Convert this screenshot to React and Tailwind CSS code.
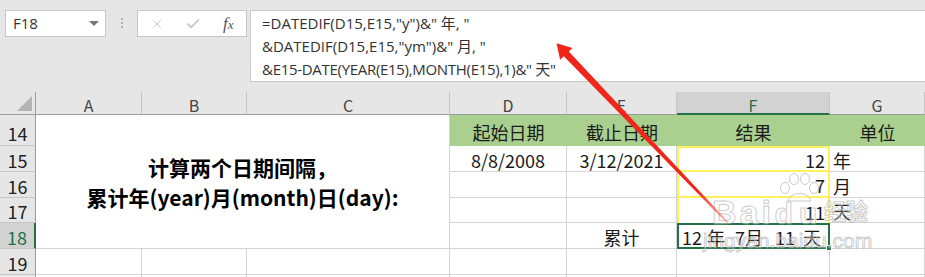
import React from "react";
import { X, Check } from "lucide-react";

const G = "border-r border-b border-[#d4d4d4]";
const CELL = "flex items-center text-[18px] leading-none text-[#1a1a1a] pt-[2px]";
const COLHDR =
  "flex items-center justify-center bg-[#e6e6e6] border-r border-b border-r-[#c6c6c6] border-b-[#9b9b9b] text-[16px] leading-none text-[#444] pt-[4px]";
const ROWHDR =
  "flex items-center justify-center bg-[#e6e6e6] border-r border-b border-r-[#9b9b9b] border-b-[#c6c6c6] text-[18px] leading-none text-[#222] pt-[2px]";
const GREEN =
  "flex items-center justify-center bg-[#a9d08e] text-[18px] leading-none text-[#1a1a1a] pt-[3px]";
const STROKE =
  "text-[rgba(255,255,255,0.35)] [-webkit-text-stroke:1px_rgba(160,160,160,0.55)] font-['Liberation_Sans','Noto_Sans_CJK_SC',sans-serif] font-bold leading-none";

export default function App() {
  return (
    <div className="relative w-[925px] h-[277px] overflow-hidden bg-white font-['Noto_Sans_CJK_SC',sans-serif]">
      {/* Formula bar */}
      <div className="h-[92px] bg-[#e6e6e6] flex items-start pt-[10px] pl-[5px]">
        <div className="w-[101px] h-[27px] bg-white border border-[#c6c6c6] flex items-center justify-between pl-[7px] pr-[6px]">
          <span className="text-[15px] leading-none text-[#333] font-['Open_Sans',sans-serif]">F18</span>
          <span className="w-0 h-0 border-l-[5px] border-r-[5px] border-t-[5px] border-l-transparent border-r-transparent border-t-[#777]" />
        </div>
        <div className="ml-[15px] mt-[8px] flex flex-col gap-[2px]">
          <span className="w-[2px] h-[2px] bg-[#b0b0b0]" />
          <span className="w-[2px] h-[2px] bg-[#b0b0b0]" />
          <span className="w-[2px] h-[2px] bg-[#b0b0b0]" />
        </div>
        <div className="ml-[14px] w-[110px] h-[27px] bg-white border border-[#c6c6c6] flex items-center pl-[12px]">
          <X size={14} strokeWidth={1.6} color="#c4c4c4" />
          <Check size={16} strokeWidth={2.6} color="#c4c4c4" className="ml-[21px]" />
          <span className="ml-[22px] font-['Liberation_Serif',serif] italic text-[17px] leading-none text-[#555]">
            f<span className="text-[13px]">x</span>
          </span>
        </div>
        <div className="ml-[3px] flex-1 h-[72px] bg-white border border-r-0 border-[#c6c6c6] pl-[11px] pt-[1px] text-[15px] leading-[23px] text-[#333] whitespace-pre font-['Open_Sans','Noto_Sans_CJK_SC',sans-serif]">
          <div>{'=DATEDIF(D15,E15,"y")&" 年, "'}</div>
          <div>{'&DATEDIF(D15,E15,"ym")&" 月, "'}</div>
          <div className="tracking-[-0.3px]">{'&E15-DATE(YEAR(E15),MONTH(E15),1)&" 天"'}</div>
        </div>
      </div>

      {/* Sheet grid */}
      <div className="grid grid-cols-[36px_106px_105px_203px_117px_110px_153px_1fr] grid-rows-[23px_31px_26px_26px_25px_26px_26px_26px]">
        {/* header row */}
        <div className="flex items-end justify-end pr-[3px] pb-[3px] bg-[#e6e6e6] border-r border-b border-[#9b9b9b]">
          <span className="w-0 h-0 border-b-[15px] border-l-[15px] border-b-[#b4b4b4] border-l-transparent" />
        </div>
        <div className={COLHDR}>A</div>
        <div className={COLHDR}>B</div>
        <div className={COLHDR}>C</div>
        <div className={COLHDR}>D</div>
        <div className={COLHDR}>E</div>
        <div className="flex items-center justify-center bg-[#d2d2d2] border-r border-r-[#c6c6c6] border-b-2 border-b-[#217346] text-[16px] leading-none text-[#217346] pt-[5px]">
          F
        </div>
        <div className={COLHDR}>G</div>

        {/* row 14 */}
        <div className={ROWHDR + " pt-[5px]"}>14</div>
        <div className="col-span-3 row-span-5 flex flex-col items-center justify-center border-r border-b border-[#d4d4d4] text-[21px] font-bold leading-[30px] text-black pt-[1px]">
          <div>计算两个日期间隔，</div>
          <div>累计年(year)月(month)日(day):</div>
        </div>
        <div className={GREEN}>起始日期</div>
        <div className={GREEN}>截止日期</div>
        <div className={GREEN}>结果</div>
        <div className={GREEN}>单位</div>

        {/* row 15 */}
        <div className={ROWHDR}>15</div>
        <div className={`${G} ${CELL} justify-center`}>8/8/2008</div>
        <div className={`${G} ${CELL} justify-center`}>3/12/2021</div>
        <div className={`${CELL} justify-end pr-[3px] border-2 border-[#fff15e]`}>12</div>
        <div className={`${G} ${CELL} pl-[3px]`}>年</div>

        {/* row 16 */}
        <div className={ROWHDR}>16</div>
        <div className={G} />
        <div className={G} />
        <div className={`${CELL} justify-end pr-[3px] border-x-2 border-b-2 border-[#fff15e]`}>7</div>
        <div className={`${G} ${CELL} pl-[3px]`}>月</div>

        {/* row 17 */}
        <div className={ROWHDR}>17</div>
        <div className={G} />
        <div className={G} />
        <div className={`${CELL} justify-end pr-[3px] border-x-2 border-[#fff15e]`}>11</div>
        <div className={`${G} ${CELL} pl-[3px]`}>天</div>

        {/* row 18 */}
        <div className="flex items-center justify-center bg-[#d2d2d2] border-r-2 border-r-[#217346] border-b border-b-[#c6c6c6] text-[18px] leading-none text-[#217346] pt-[2px]">
          18
        </div>
        <div className={G} />
        <div className={`${G} ${CELL} justify-center`}>累计</div>
        <div className={`relative ${CELL} pl-[3px] border-2 border-[#217346]`}>
          <span>12</span>
          <span className="ml-[5px]">年</span>
          <span className="ml-[10px]">7</span>
          <span>月</span>
          <span className="ml-[12px]">11</span>
          <span className="ml-[8px]">天</span>
          <span className="absolute -right-[4px] -bottom-[4px] w-[6px] h-[6px] bg-[#217346] border border-white" />
        </div>
        <div className={G} />

        {/* row 19 */}
        <div className={ROWHDR}>19</div>
        <div className={G} />
        <div className={G} />
        <div className={G} />
        <div className={G} />
        <div className={G} />
        <div className={G} />
        <div className={G} />

        {/* row 20 (only its top edge is visible) */}
        <div className={ROWHDR} />
        <div className={G} />
        <div className={G} />
        <div className={G} />
        <div className={G} />
        <div className={G} />
        <div className={G} />
        <div className={G} />
      </div>

      {/* Watermark */}
      <div className="absolute left-[703px] top-[173px] pointer-events-none flex flex-col">
        <div className="flex items-end">
          <span className={`${STROKE} text-[34px] tracking-[3px] ml-[9px]`}>Bai</span>
          <div className="flex flex-col items-center">
            <svg width="50" height="30" viewBox="0 0 50 30" fill="rgba(255,255,255,0.3)" stroke="rgba(160,160,160,0.55)" strokeWidth="1">
              <ellipse cx="11" cy="15" rx="4.5" ry="5.5" />
              <ellipse cx="20" cy="6" rx="4.5" ry="5.5" />
              <ellipse cx="31" cy="6" rx="4.5" ry="5.5" />
              <ellipse cx="40" cy="15" rx="4.5" ry="5.5" />
              <path d="M14 28 C17 18, 34 18, 37 28 Z" />
            </svg>
            <span className={`${STROKE} text-[30px] tracking-[6px] -mt-[4px]`}>du</span>
          </div>
          <span className={`${STROKE} text-[22px] mb-[6px]`}>经验</span>
        </div>
        <span className={`${STROKE} text-[21px] font-normal mt-[1px]`}>jingyan.baidu.com</span>
      </div>

      {/* Red arrow */}
      <svg className="absolute left-0 top-0 pointer-events-none" width="925" height="277" viewBox="0 0 925 277">
        <defs>
          <linearGradient id="arrowfade" gradientUnits="userSpaceOnUse" x1="556" y1="43" x2="728" y2="223">
            <stop offset="0" stopColor="#f0261a" />
            <stop offset="0.82" stopColor="#f0261a" />
            <stop offset="1" stopColor="#f0261a" stopOpacity="0.25" />
          </linearGradient>
        </defs>
        <polygon
          points="556.5,43.3 572.5,48 568.8,51.5 728.7,222.3 727.3,223.7 563.8,56.3 560.1,59.8"
          fill="url(#arrowfade)"
        />
      </svg>
    </div>
  );
}
